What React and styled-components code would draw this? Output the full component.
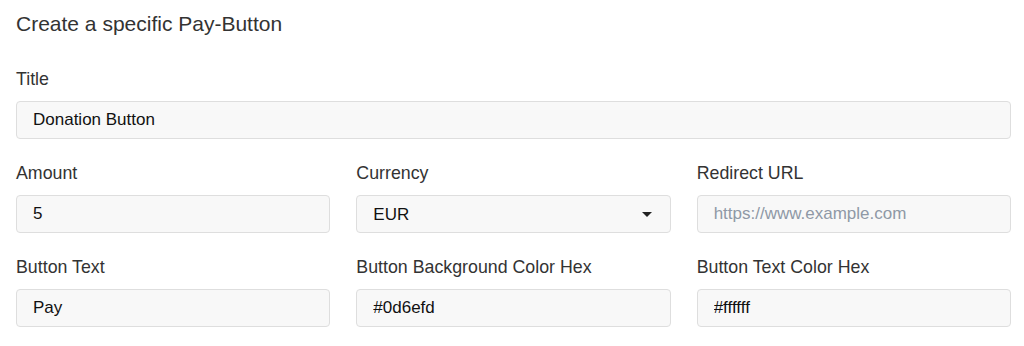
import React from "react";
import styled, { createGlobalStyle } from "styled-components";

const Global = createGlobalStyle`
  html, body { margin: 0; padding: 0; background: #ffffff; }
  body { font-family: "Liberation Sans", Arial, Helvetica, sans-serif; }
  * { box-sizing: border-box; }
`;

const Page = styled.div`
  padding: 12px 13px 0 16px;
`;

const Heading = styled.h2`
  margin: 0 0 33px;
  font-size: 21px;
  line-height: 24px;
  font-weight: 400;
  color: #333333;
`;

const Grid = styled.div`
  display: grid;
  grid-template-columns: repeat(${(p) => p.$cols}, minmax(0, 1fr));
  column-gap: 26px;
  row-gap: 24px;
  margin-bottom: 24px;
`;

const Field = styled.div`
  display: flex;
  flex-direction: column;
  min-width: 0;
`;

const Label = styled.label`
  font-size: 17.8px;
  line-height: 20px;
  color: #333333;
  margin-bottom: 12px;
  white-space: nowrap;
`;

const Input = styled.input`
  width: 100%;
  height: 38px;
  padding: 0 16px;
  font-family: inherit;
  font-size: 17px;
  color: #111111;
  background: #f8f8f8;
  border: 1px solid #dedede;
  border-radius: 4px;
  outline: none;
  &::placeholder { color: #8f99a6; }
`;

const SelectWrap = styled.div`
  position: relative;
`;

const Select = styled.select`
  width: 100%;
  height: 38px;
  padding: 0 16px;
  font-family: inherit;
  font-size: 17px;
  color: #111111;
  background: #f8f8f8;
  border: 1px solid #dedede;
  border-radius: 4px;
  appearance: none;
  -webkit-appearance: none;
  outline: none;
`;

const Caret = styled.svg`
  position: absolute;
  right: 19px;
  top: 17px;
  pointer-events: none;
`;

const fields = [
  [
    { label: "Amount", value: "5" },
    { label: "Currency", select: true, value: "EUR" },
    { label: "Redirect URL", placeholder: "https://www.example.com" },
  ],
  [
    { label: "Button Text", value: "Pay" },
    { label: "Button Background Color Hex", value: "#0d6efd" },
    { label: "Button Text Color Hex", value: "#ffffff" },
  ],
];

function FieldItem({ f }) {
  return (
    <Field>
      <Label>{f.label}</Label>
      {f.select ? (
        <SelectWrap>
          <Select defaultValue={f.value}>
            <option value="EUR">EUR</option>
            <option value="USD">USD</option>
          </Select>
          <Caret width="10" height="5" viewBox="0 0 10 5">
            <path d="M0 0 L10 0 L5 5 Z" fill="#222" />
          </Caret>
        </SelectWrap>
      ) : (
        <Input defaultValue={f.value} placeholder={f.placeholder} />
      )}
    </Field>
  );
}

export default function App() {
  return (
    <Page>
      <Global />
      <Heading>Create a specific Pay-Button</Heading>
      <Grid $cols={1}>
        <FieldItem f={{ label: "Title", value: "Donation Button" }} />
      </Grid>
      {fields.map((row, i) => (
        <Grid $cols={3} key={i}>
          {row.map((f) => (
            <FieldItem key={f.label} f={f} />
          ))}
        </Grid>
      ))}
    </Page>
  );
}
